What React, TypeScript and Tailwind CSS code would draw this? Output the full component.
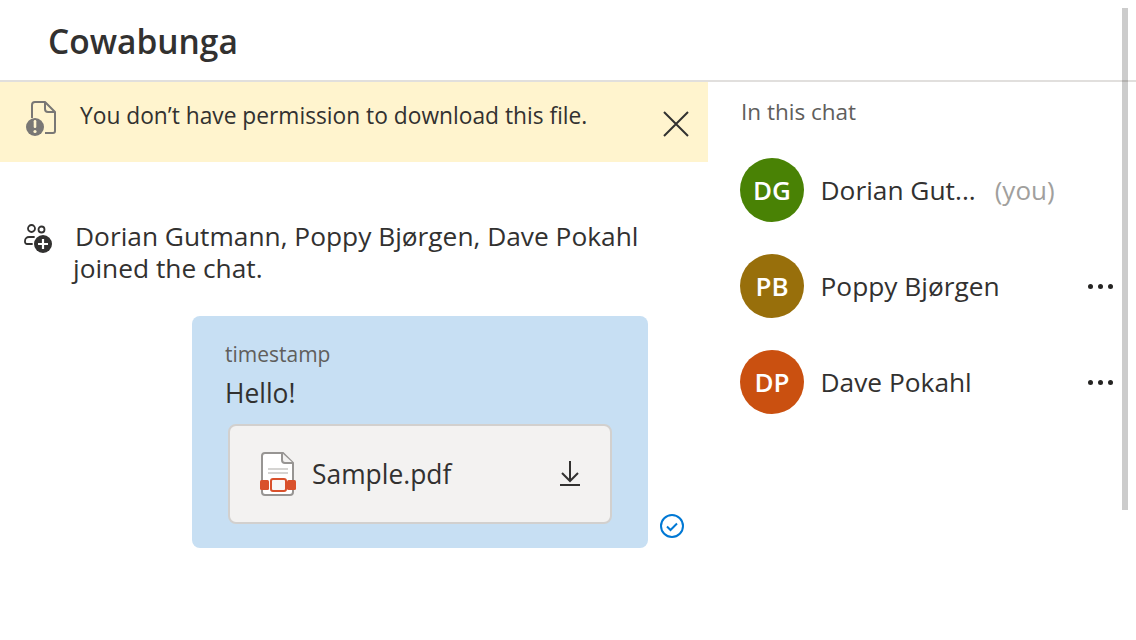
const font = { fontFamily: '"Open Sans", "Noto Sans", sans-serif' };

function Dots() {
  return (
    <div className="ml-auto mr-[23px] flex items-center gap-[5px]">
      <span className="h-[5px] w-[5px] rounded-full bg-[#252423]" />
      <span className="h-[5px] w-[5px] rounded-full bg-[#252423]" />
      <span className="h-[5px] w-[5px] rounded-full bg-[#252423]" />
    </div>
  );
}

function Member({ initials, name, color, you }: { initials: string; name: string; color: string; you?: boolean }) {
  return (
    <div className="flex h-16 items-center">
      <div className={`flex h-16 w-16 items-center justify-center rounded-full text-[26px] font-semibold text-white ${color}`}>
        {initials}
      </div>
      <span className="ml-[16.500px] text-[26.300px] leading-none text-[#323130]">{name}</span>
      {you ? <span className="ml-[19px] text-[26px] leading-none text-[#a19f9d]">(you)</span> : <Dots />}
    </div>
  );
}

function FileWarnIcon() {
  return (
    <svg width="32" height="36" viewBox="0 0 32 36" fill="none">
      <path d="M7 17V4a3 3 0 0 1 3-3h10l10 10v19a2 2 0 0 1-2 2h-8" stroke="#797775" strokeWidth="2" strokeLinejoin="round" />
      <path d="M20 1v7a3 3 0 0 0 3 3h7" stroke="#797775" strokeWidth="2" />
      <circle cx="10" cy="26" r="9" fill="#797775" />
      <rect x="8.700" y="19" width="2.600" height="8" rx="1.200" fill="#fff4ce" />
      <circle cx="10" cy="30.500" r="1.600" fill="#fff4ce" />
    </svg>
  );
}

function PeopleAddIcon() {
  return (
    <svg width="30" height="30" viewBox="0 0 30 30" fill="none">
      <circle cx="8.500" cy="4.500" r="3.500" stroke="#323130" strokeWidth="1.800" />
      <circle cx="18.500" cy="5.500" r="3" stroke="#323130" strokeWidth="1.800" />
      <path d="M9 20H4a2 2 0 0 1-2-2v-1a4 4 0 0 1 4-4h5" stroke="#323130" strokeWidth="1.800" strokeLinecap="round" />
      <circle cx="20" cy="20" r="9" fill="#323130" />
      <path d="M20 15v10M15 20h10" stroke="#fff" strokeWidth="2.200" />
    </svg>
  );
}

function PdfIcon() {
  return (
    <svg width="36" height="44" viewBox="0 0 36 44" fill="none">
      <path d="M5 1h18l10 10v29a3 3 0 0 1-3 3H5a3 3 0 0 1-3-3V4a3 3 0 0 1 3-3Z" fill="#fff" stroke="#979593" strokeWidth="2" />
      <path d="M22 1v7a3 3 0 0 0 3 3h8" fill="#f3f2f1" stroke="#979593" strokeWidth="2" />
      <path d="M8 17h20M8 21h20" stroke="#c8c6c4" strokeWidth="1.500" />
      <rect x="0" y="28" width="9" height="10" rx="1.500" fill="#d9512c" />
      <rect x="27" y="28" width="9" height="10" rx="1.500" fill="#d9512c" />
      <rect x="11" y="27" width="15" height="12" rx="2" fill="#f8f7f6" stroke="#d9512c" strokeWidth="2" />
    </svg>
  );
}

export default function App() {
  return (
    <div className="relative h-[640px] w-[1136px] overflow-hidden bg-white text-[#323130]" style={font}>
      {/* header */}
      <div className="flex h-[82px] items-center border-b-2 border-[#e1dfdd] pl-12 pt-[3px]">
        <h1 className="text-[33.500px] font-semibold leading-none text-[#323130]">Cowabunga</h1>
      </div>

      <div className="flex">
        {/* chat column */}
        <div className="w-[708px]">
          <div className="flex h-20 items-start bg-[#fff4ce] pl-[25px]">
            <div className="mt-[19px]">
              <FileWarnIcon />
            </div>
            <span className="ml-[23px] mt-[18px] text-[22.750px] leading-[32px]">You don’t have permission to download this file.</span>
            <svg className="ml-auto mr-[19px] mt-[29px]" width="26" height="26" viewBox="0 0 26 26">
              <path d="M1 1l24 24M25 1L1 25" stroke="#323130" strokeWidth="2" />
            </svg>
          </div>

          <div className="mt-[58px] flex pl-[23px]">
            <div className="mt-[4px]">
              <PeopleAddIcon />
            </div>
            <p className="ml-[20px] w-[590px] indent-[2px] text-[26.300px] leading-[32px]">
              Dorian Gutmann, Poppy Bjørgen, Dave Pokahl joined the chat.
            </p>
          </div>

          <div className="ml-[192px] mt-[32px] flex items-end">
            <div className="h-[232px] w-[456px] rounded-lg bg-[#c7dff3] pl-[33px] pt-6">
              <div className="text-[21px] leading-7 text-[#605e5c]">timestamp</div>
              <div className="mt-[9px] text-[26.400px] leading-8">Hello!</div>
              <div className="ml-[3px] mt-[15px] flex h-[100px] w-[384px] items-center rounded-lg border-2 border-[#d2d0ce] bg-[#f3f2f1] pl-[30px] pr-[29px]">
                <PdfIcon />
                <span className="ml-[16px] mt-[1px] text-[26.400px]">Sample.pdf</span>
                <svg className="mb-[2px] ml-auto" width="22" height="26" viewBox="0 0 22 26" fill="none">
                  <path d="M11 1v20M3 13l8 8 8-8M1 25h20" stroke="#323130" strokeWidth="2" />
                </svg>
              </div>
            </div>
            <svg className="mb-[10px] ml-3" width="24" height="24" viewBox="0 0 24 24" fill="none">
              <circle cx="12" cy="12" r="11" stroke="#0078d4" strokeWidth="2" />
              <path d="M7 12.500l3.500 3.500L17 9.500" stroke="#0078d4" strokeWidth="2" />
            </svg>
          </div>
        </div>

        {/* members column */}
        <div className="flex-1 pl-[33px] pt-[14px]">
          <div className="text-[22.500px] leading-8 text-[#605e5c]">In this chat</div>
          <div className="-ml-px mt-[30px] flex flex-col gap-8">
            <Member initials="DG" name="Dorian Gut..." color="bg-[#498205]" you />
            <Member initials="PB" name="Poppy Bjørgen" color="bg-[#986f0b]" />
            <Member initials="DP" name="Dave Pokahl" color="bg-[#ca5010]" />
          </div>
        </div>
      </div>

      {/* scrollbar thumb */}
      <div className="absolute right-2 top-2 h-[502px] w-[6px] bg-black/20" />
    </div>
  );
}
